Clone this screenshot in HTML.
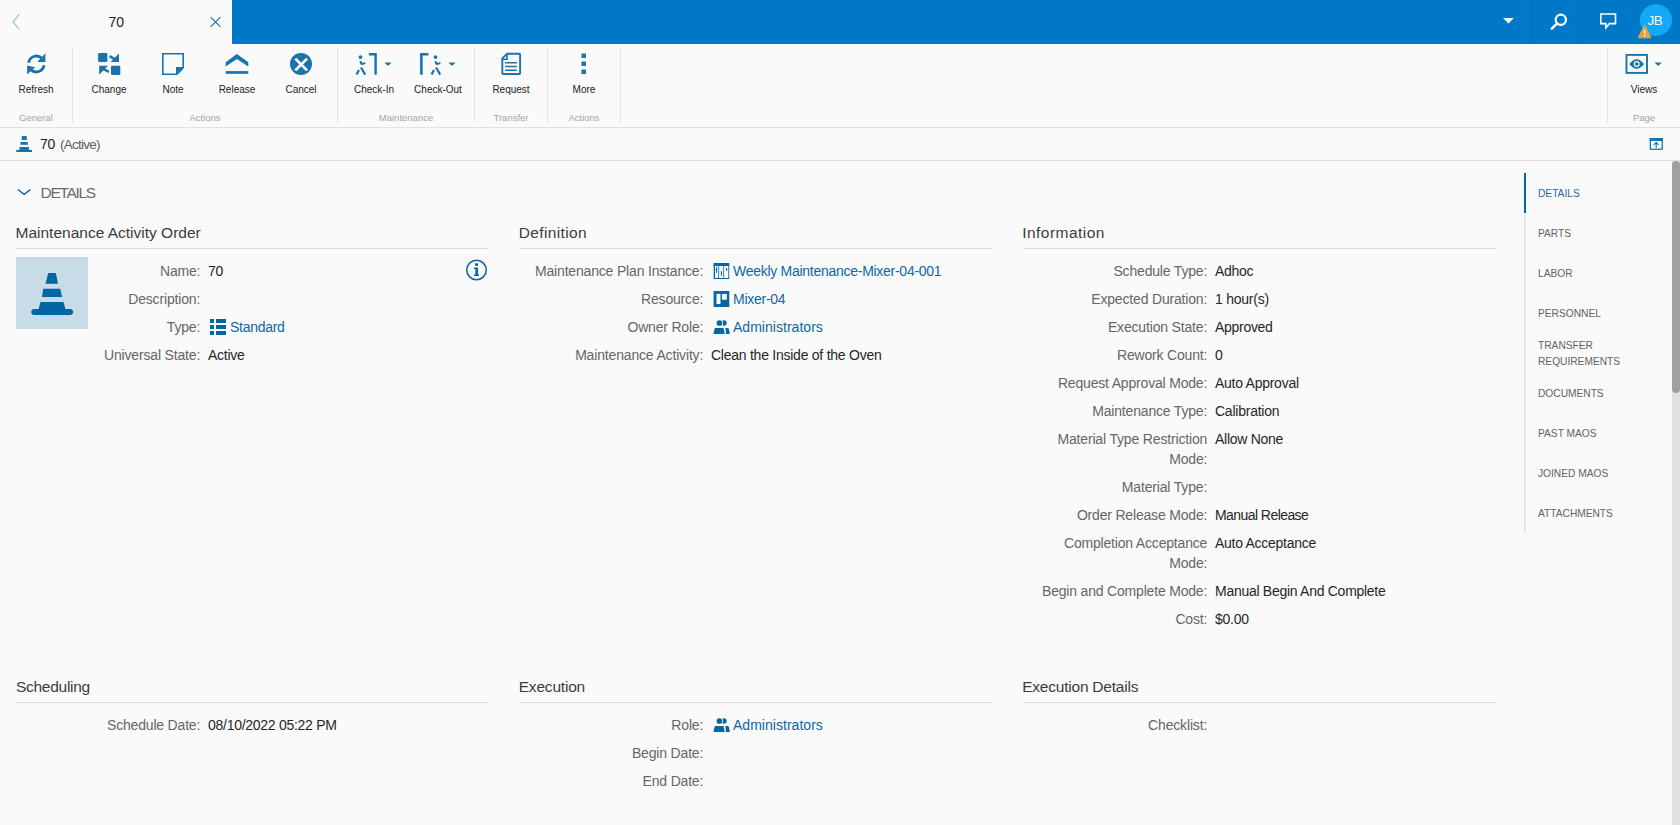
<!DOCTYPE html>
<html><head><meta charset="utf-8"><style>
html,body{margin:0;padding:0;width:1680px;height:825px;overflow:hidden;background:#fafafa;position:relative;font-family:"Liberation Sans", sans-serif}
.t{position:absolute;white-space:nowrap;line-height:1}
svg{overflow:visible}
</style></head><body>
<div style="position:absolute;left:232px;top:0px;width:1448px;height:44px;background:#0078c8"></div>
<div style="position:absolute;left:1532px;top:0px;width:1px;height:44px;background:#0570b8"></div>
<div style="position:absolute;left:1583px;top:0px;width:1px;height:44px;background:#0570b8"></div>
<svg style="position:absolute;left:0px;top:0px" width="30" height="40" viewBox="0 0 30 40"><path d="M19.2 14.3 L13.1 21.9 L19.2 29.4" fill="none" stroke="#a6c8e0" stroke-width="1.4"/></svg>
<div class="t" style="left:108.5px;top:15.15px;font-size:14px;color:#222;">70</div>
<svg style="position:absolute;left:210px;top:17px" width="11" height="11" viewBox="0 0 11 11"><path d="M0.6 0.2 L10.4 9.9 M10.4 0.2 L0.6 9.9" stroke="#2a6aa0" stroke-width="1.1"/></svg>
<svg style="position:absolute;left:1503px;top:17px" width="11" height="7" viewBox="0 0 11 7"><path d="M0 1 H10.8 L5.4 6.5 Z" fill="#fff"/></svg>
<svg style="position:absolute;left:1540px;top:0px" width="40" height="44" viewBox="0 0 40 44"><circle cx="20.8" cy="19.8" r="5.1" fill="none" stroke="#fff" stroke-width="2.2"/><path d="M17.2 23.4 L11.8 28.6" stroke="#fff" stroke-width="2.6" stroke-linecap="round"/></svg>
<svg style="position:absolute;left:1590px;top:0px" width="40" height="44" viewBox="0 0 40 44"><path d="M10.8 14 H25.5 V23.6 H19.5 L15.8 27.8 V23.6 H10.8 Z" fill="none" stroke="#fff" stroke-width="1.6" stroke-linejoin="miter"/></svg>
<svg style="position:absolute;left:1640px;top:4px" width="32" height="32" viewBox="0 0 32 32"><circle cx="16" cy="16" r="16" fill="#13a9f8"/></svg>
<div class="t" style="left:1355px;width:600px;text-align:center;top:13.77px;font-size:13.5px;color:#f4faff;letter-spacing:-0.5px">JB</div>
<svg style="position:absolute;left:1637.5px;top:24.5px" width="15" height="14" viewBox="0 0 15 14"><path d="M6.6 1 L12.6 12.4 H0.7 Z" fill="#e0a24e" stroke="#e0a24e" stroke-linejoin="round" stroke-width="1.5"/><path d="M6.6 4.9 V8.8" stroke="#eef6fb" stroke-width="1.4"/><rect x="5.9" y="10" width="1.4" height="1.4" fill="#eef6fb"/></svg>
<div style="position:absolute;left:0px;top:127px;width:1680px;height:1px;background:#e2e2e2"></div>
<div style="position:absolute;left:72px;top:48px;width:1px;height:75px;background:#e4e4e4"></div>
<div style="position:absolute;left:337px;top:48px;width:1px;height:75px;background:#e4e4e4"></div>
<div style="position:absolute;left:474px;top:48px;width:1px;height:75px;background:#e4e4e4"></div>
<div style="position:absolute;left:547px;top:48px;width:1px;height:75px;background:#e4e4e4"></div>
<div style="position:absolute;left:620px;top:48px;width:1px;height:75px;background:#e4e4e4"></div>
<div style="position:absolute;left:1607px;top:48px;width:1px;height:75px;background:#e4e4e4"></div>
<div class="t" style="left:-264px;width:600px;text-align:center;top:84.53px;font-size:10px;color:#222;">Refresh</div>
<div class="t" style="left:-191px;width:600px;text-align:center;top:84.53px;font-size:10px;color:#222;">Change</div>
<div class="t" style="left:-127px;width:600px;text-align:center;top:84.53px;font-size:10px;color:#222;">Note</div>
<div class="t" style="left:-63px;width:600px;text-align:center;top:84.53px;font-size:10px;color:#222;">Release</div>
<div class="t" style="left:1px;width:600px;text-align:center;top:84.53px;font-size:10px;color:#222;">Cancel</div>
<div class="t" style="left:74px;width:600px;text-align:center;top:84.53px;font-size:10px;color:#222;">Check-In</div>
<div class="t" style="left:138px;width:600px;text-align:center;top:84.53px;font-size:10px;color:#222;">Check-Out</div>
<div class="t" style="left:211px;width:600px;text-align:center;top:84.53px;font-size:10px;color:#222;">Request</div>
<div class="t" style="left:284px;width:600px;text-align:center;top:84.53px;font-size:10px;color:#222;">More</div>
<div class="t" style="left:1344px;width:600px;text-align:center;top:84.53px;font-size:10px;color:#222;">Views</div>
<div class="t" style="left:-264px;width:600px;text-align:center;top:112.96px;font-size:9.5px;color:#a3a3a3;">General</div>
<div class="t" style="left:-95px;width:600px;text-align:center;top:112.96px;font-size:9.5px;color:#a3a3a3;">Actions</div>
<div class="t" style="left:106px;width:600px;text-align:center;top:112.96px;font-size:9.5px;color:#a3a3a3;">Maintenance</div>
<div class="t" style="left:211px;width:600px;text-align:center;top:112.96px;font-size:9.5px;color:#a3a3a3;">Transfer</div>
<div class="t" style="left:284px;width:600px;text-align:center;top:112.96px;font-size:9.5px;color:#a3a3a3;">Actions</div>
<div class="t" style="left:1344px;width:600px;text-align:center;top:112.96px;font-size:9.5px;color:#a3a3a3;">Page</div>
<svg style="position:absolute;left:22px;top:50px" width="30" height="30" viewBox="0 0 30 30"><path d="M6.6 12.8 A7.9 7.9 0 0 1 19.8 8.2" fill="none" stroke="#1a73ab" stroke-width="2.8"/>
<path d="M23.4 3.3 V12.1 H15.2 Z" fill="#1a73ab"/>
<path d="M22 15.2 A7.9 7.9 0 0 1 8.8 19.8" fill="none" stroke="#1a73ab" stroke-width="2.8"/>
<path d="M5.1 15.4 V24.5 H5.1 L13.2 17.3 Z" fill="#1a73ab"/></svg>
<svg style="position:absolute;left:95px;top:50px" width="30" height="30" viewBox="0 0 30 30"><rect x="3.1" y="2.9" width="9.3" height="9.1" rx="1.2" fill="#1a73ab"/>
<rect x="16" y="15.8" width="9.3" height="9.1" rx="1.2" fill="#1a73ab"/>
<path d="M14.6 6.2 L20.5 9.6" stroke="#1a73ab" stroke-width="2.5"/><path d="M24 3.6 V12 H15.5 Z" fill="#1a73ab"/>
<path d="M13.8 22 L8 18.6" stroke="#1a73ab" stroke-width="2.5"/><path d="M4.2 24.7 V15.8 H12.9 Z" fill="#1a73ab"/></svg>
<svg style="position:absolute;left:162px;top:53px" width="23" height="23" viewBox="0 0 23 23"><path d="M0.8 0.8 H21.2 V14.5 L14.5 21.2 H0.8 Z" fill="none" stroke="#1a73ab" stroke-width="1.6"/>
<path d="M21.2 14 V16 L16 21.2 H14 V14 Z" fill="#1a73ab"/></svg>
<svg style="position:absolute;left:225px;top:53px" width="24" height="22" viewBox="0 0 24 22"><path d="M0.7 9.2 L11.9 1.1 L23.3 9.2 V13.6 L11.9 5.9 L0.7 13.6 Z" fill="#1a73ab"/>
<rect x="0.7" y="18.1" width="22.6" height="2.7" fill="#1a73ab"/></svg>
<svg style="position:absolute;left:290px;top:53px" width="22" height="22" viewBox="0 0 22 22"><circle cx="11" cy="11" r="11" fill="#1a73ab"/>
<path d="M5.3 5.6 L17.1 17.4 M17.1 5.6 L5.3 17.4" stroke="#fff" stroke-width="2.7"/></svg>
<svg style="position:absolute;left:350px;top:48px" width="46" height="32" viewBox="0 0 46 32"><circle cx="10.5" cy="9.1" r="1.9" fill="#1a73ab"/>
<path d="M10.3 13.3 L11.6 16 L15.4 15.1" fill="none" stroke="#1a73ab" stroke-width="2" stroke-linejoin="round"/>
<path d="M11 19.5 L15.2 26.6 M8.9 22 L6.6 26.6" fill="none" stroke="#1a73ab" stroke-width="2.2"/><path d="M18.9 6.2 H25.6 V26.8" fill="none" stroke="#1a73ab" stroke-width="2.4"/>
<path d="M34.5 14.5 H41.5 L38 18 Z" fill="#1a73ab"/></svg>
<svg style="position:absolute;left:414px;top:48px" width="46" height="32" viewBox="0 0 46 32"><path d="M14.5 6.2 H7.4 V26.8" fill="none" stroke="#1a73ab" stroke-width="2.6"/><circle cx="21.5" cy="9.1" r="1.9" fill="#1a73ab"/>
<path d="M21.3 13.3 L22.6 16 L26.4 15.1" fill="none" stroke="#1a73ab" stroke-width="2" stroke-linejoin="round"/>
<path d="M22 19.5 L26.2 26.6 M19.9 22 L17.6 26.6" fill="none" stroke="#1a73ab" stroke-width="2.2"/><path d="M34.5 14.5 H41.5 L38 18 Z" fill="#1a73ab"/></svg>
<svg style="position:absolute;left:496px;top:48px" width="32" height="32" viewBox="0 0 32 32"><path d="M10.9 5.8 H23.2 Q24.1 5.8 24.1 6.7 V25.1 Q24.1 26 23.2 26 H7.2 Q6.3 26 6.3 25.1 V10.4 Z" fill="none" stroke="#1a73ab" stroke-width="1.9" stroke-linejoin="round"/>
<path d="M11 5.8 V11.3 H6.3" fill="none" stroke="#1a73ab" stroke-width="1.6"/>
<path d="M9.1 14.7 H20.9 M9.1 18.6 H20.9 M9.1 22.3 H20.9" stroke="#1a73ab" stroke-width="1.5"/></svg>
<svg style="position:absolute;left:581px;top:53px" width="6" height="22" viewBox="0 0 6 22"><rect x="0.5" y="0.5" width="4.5" height="4.5" fill="#1a73ab"/><rect x="0.5" y="8.5" width="4.5" height="4.5" fill="#1a73ab"/><rect x="0.5" y="16.5" width="4.5" height="4.5" fill="#1a73ab"/></svg>
<svg style="position:absolute;left:1620px;top:48px" width="46" height="32" viewBox="0 0 46 32"><rect x="6.5" y="6.9" width="20.5" height="18" fill="none" stroke="#1a73ab" stroke-width="1.9"/>
<path d="M9.3 16 Q16.7 6.5 24 16 Q16.7 25.5 9.3 16 Z" fill="#1a73ab"/><circle cx="16.7" cy="16" r="3" fill="#fafafa"/><circle cx="16.7" cy="16" r="1.8" fill="#1a73ab"/>
<path d="M34.5 14.5 H41.8 L38.2 18 Z" fill="#1a73ab"/></svg>
<div style="position:absolute;left:0px;top:160px;width:1680px;height:1px;background:#e2e2e2"></div>
<svg style="position:absolute;left:12px;top:132px" width="24" height="24" viewBox="0 0 24 24"><path d="M9.9 3.9 H14.6 L15 7.9 H9.6 Z M8.6 10 H15.7 L16 12.8 H8.3 Z M7.6 15 H16.8 L17 17.9 H20 V20 H4.2 V17.9 H7.3 Z" fill="#1a73ab"/></svg>
<div class="t" style="left:40px;top:137.15px;font-size:14px;color:#222;letter-spacing:-0.3px">70</div>
<div class="t" style="left:60px;top:137.57px;font-size:13.5px;color:#5a5a5a;letter-spacing:-0.75px">(Active)</div>
<svg style="position:absolute;left:1644px;top:132px" width="24" height="24" viewBox="0 0 24 24"><rect x="6.35" y="6.65" width="11.9" height="10.6" fill="none" stroke="#1a73ab" stroke-width="1.3"/><rect x="5.7" y="6" width="13.2" height="3" fill="#1a73ab"/>
<path d="M12.2 15.9 V10.4 M9.9 12.8 L12.2 10.4 L14.5 12.8" fill="none" stroke="#1a73ab" stroke-width="1.1"/></svg>
<svg style="position:absolute;left:12px;top:180px" width="28" height="24" viewBox="0 0 28 24"><path d="M5.8 9.5 L12.2 14.3 L18.5 9.5" fill="none" stroke="#1b62a2" stroke-width="1.5"/></svg>
<div class="t" style="left:40.5px;top:184.88px;font-size:15.5px;color:#6a6a6a;letter-spacing:-1.3px">DETAILS</div>
<div class="t" style="left:15.5px;top:224.88px;font-size:15.5px;color:#3c3c3c;letter-spacing:0px">Maintenance Activity Order</div>
<div style="position:absolute;left:16px;top:248px;width:473px;height:1px;background:#dcdcdc"></div>
<div class="t" style="left:518.7px;top:224.88px;font-size:15.5px;color:#3c3c3c;letter-spacing:0.37px">Definition</div>
<div style="position:absolute;left:519px;top:248px;width:474px;height:1px;background:#dcdcdc"></div>
<div class="t" style="left:1022.2px;top:224.88px;font-size:15.5px;color:#3c3c3c;letter-spacing:0.47px">Information</div>
<div style="position:absolute;left:1023px;top:248px;width:473px;height:1px;background:#dcdcdc"></div>
<div class="t" style="left:16px;top:678.88px;font-size:15.5px;color:#3c3c3c;letter-spacing:-0.28px">Scheduling</div>
<div style="position:absolute;left:16px;top:702px;width:473px;height:1px;background:#dcdcdc"></div>
<div class="t" style="left:518.7px;top:678.88px;font-size:15.5px;color:#3c3c3c;letter-spacing:-0.19px">Execution</div>
<div style="position:absolute;left:519px;top:702px;width:474px;height:1px;background:#dcdcdc"></div>
<div class="t" style="left:1022.2px;top:678.88px;font-size:15.5px;color:#3c3c3c;letter-spacing:-0.22px">Execution Details</div>
<div style="position:absolute;left:1023px;top:702px;width:473px;height:1px;background:#dcdcdc"></div>
<div class="t" style="right:1479.7820584375px;text-align:right;top:264.15px;font-size:14px;color:#666666;letter-spacing:-0.218px">Name:</div>
<div class="t" style="left:208px;top:264.15px;font-size:14px;color:#262626;letter-spacing:-0.306px">70</div>
<div class="t" style="right:1479.837214453125px;text-align:right;top:292.15px;font-size:14px;color:#666666;letter-spacing:-0.163px">Description:</div>
<div class="t" style="right:1479.81902375px;text-align:right;top:320.15px;font-size:14px;color:#666666;letter-spacing:-0.181px">Type:</div>
<svg style="position:absolute;left:210px;top:319px" width="17" height="17" viewBox="0 0 17 17"><g fill="#0566a5"><rect x="0" y="0" width="4" height="4"/><rect x="6" y="0" width="10" height="4"/><rect x="0" y="6" width="4" height="4"/><rect x="6" y="6" width="10" height="4"/><rect x="0" y="12" width="4" height="4"/><rect x="6" y="12" width="10" height="4"/></g></svg>
<div class="t" style="left:230px;top:320.15px;font-size:14px;color:#0b67a8;letter-spacing:-0.279px">Standard</div>
<div class="t" style="right:1479.8367772460938px;text-align:right;top:348.15px;font-size:14px;color:#666666;letter-spacing:-0.163px">Universal State:</div>
<div class="t" style="left:208px;top:348.15px;font-size:14px;color:#262626;letter-spacing:-0.250px">Active</div>
<svg style="position:absolute;left:16px;top:257px" width="72" height="72" viewBox="0 0 72 72"><rect width="72" height="72" fill="#c8dce8"/>
<path d="M32.2 16 H39.8 L42 26.8 H29.5 Z M27.3 31.7 H44.2 L46.1 39.9 H25.9 Z M24.5 45.1 H47.5 L49.4 51.9 H54.1 Q57.1 51.9 57.1 54.9 Q57.1 57.9 54.1 57.9 H18.3 Q15.3 57.9 15.3 54.9 Q15.3 51.9 18.3 51.9 H22.6 Z" fill="#0066a4"/></svg>
<svg style="position:absolute;left:460px;top:255px" width="32" height="32" viewBox="0 0 32 32"><circle cx="16.5" cy="15" r="9.75" fill="none" stroke="#0566a5" stroke-width="1.5"/>
<rect x="15.1" y="8.3" width="2.9" height="2.6" fill="#0566a5"/><path d="M14 12.4 H18 V19.4 H19 V21.1 H14 V19.4 H15.4 V13.9 H14 Z" fill="#0566a5"/></svg>
<div class="t" style="right:976.8243856370192px;text-align:right;top:264.15px;font-size:14px;color:#666666;letter-spacing:-0.176px">Maintenance Plan Instance:</div>
<svg style="position:absolute;left:713px;top:263px" width="17" height="17" viewBox="0 0 17 17"><g fill="#0566a5"><rect x="0.7" y="0" width="15.5" height="2.9" rx="0.5"/><rect x="0.7" y="0" width="1.3" height="15.9"/><rect x="15.3" y="0" width="0.9" height="15.9"/><rect x="0.7" y="14.9" width="15.5" height="1" rx="0.3"/><rect x="5.3" y="0" width="0.8" height="15.9"/><rect x="10.3" y="0" width="0.8" height="15.9"/><rect x="3" y="4.1" width="1.1" height="5.6"/><rect x="7.9" y="8.2" width="1.1" height="4.5"/><rect x="13" y="5" width="1.2" height="2.7"/></g></svg>
<div class="t" style="left:733px;top:264.15px;font-size:14px;color:#0b67a8;letter-spacing:-0.275px">Weekly Maintenance-Mixer-04-001</div>
<div class="t" style="right:976.8126425347223px;text-align:right;top:292.15px;font-size:14px;color:#666666;letter-spacing:-0.187px">Resource:</div>
<svg style="position:absolute;left:713px;top:291px" width="17" height="17" viewBox="0 0 17 17"><rect x="0.6" y="0" width="15.7" height="16" fill="#0566a5"/><rect x="3.5" y="2.9" width="4" height="10.1" fill="#fafafa"/><rect x="9" y="2.9" width="4.85" height="5.8" fill="#fafafa"/></svg>
<div class="t" style="left:733px;top:292.15px;font-size:14px;color:#0b67a8;letter-spacing:-0.267px">Mixer-04</div>
<div class="t" style="right:976.8130711647727px;text-align:right;top:320.15px;font-size:14px;color:#666666;letter-spacing:-0.187px">Owner Role:</div>
<svg style="position:absolute;left:713px;top:319px" width="18" height="17" viewBox="0 0 18 17"><circle cx="10.9" cy="4" r="2.8" fill="#0566a5"/><circle cx="6.45" cy="4" r="3.7" fill="#fafafa"/><g fill="#0566a5"><circle cx="6.45" cy="4" r="2.85"/><path d="M2.3 8.9 H10.1 Q10.6 8.9 10.7 9.4 L11.8 14.9 H0.4 L1.7 9.4 Q1.8 8.9 2.3 8.9 Z"/><path d="M12.3 8.9 H14.6 Q15.6 8.9 15.9 10 L16.9 14.9 H13.1 Z"/></g></svg>
<div class="t" style="left:733px;top:320.15px;font-size:14px;color:#0b67a8;letter-spacing:0.029px">Administrators</div>
<div class="t" style="right:976.8345020833333px;text-align:right;top:348.15px;font-size:14px;color:#666666;letter-spacing:-0.165px">Maintenance Activity:</div>
<div class="t" style="left:711px;top:348.15px;font-size:14px;color:#262626;letter-spacing:-0.249px">Clean the Inside of the Oven</div>
<div class="t" style="right:472.8183035714285px;text-align:right;top:264.15px;font-size:14px;color:#666666;letter-spacing:-0.182px">Schedule Type:</div>
<div class="t" style="left:1215px;top:264.15px;font-size:14px;color:#262626;letter-spacing:-0.312px">Adhoc</div>
<div class="t" style="right:472.8251878472222px;text-align:right;top:292.15px;font-size:14px;color:#666666;letter-spacing:-0.175px">Expected Duration:</div>
<div class="t" style="left:1215px;top:292.15px;font-size:14px;color:#262626;letter-spacing:-0.245px">1 hour(s)</div>
<div class="t" style="right:472.83160664062507px;text-align:right;top:320.15px;font-size:14px;color:#666666;letter-spacing:-0.168px">Execution State:</div>
<div class="t" style="left:1215px;top:320.15px;font-size:14px;color:#262626;letter-spacing:-0.294px">Approved</div>
<div class="t" style="right:472.81177139423085px;text-align:right;top:348.15px;font-size:14px;color:#666666;letter-spacing:-0.188px">Rework Count:</div>
<div class="t" style="left:1215px;top:348.15px;font-size:14px;color:#262626;letter-spacing:-0.306px">0</div>
<div class="t" style="right:472.8158330255683px;text-align:right;top:376.15px;font-size:14px;color:#666666;letter-spacing:-0.184px">Request Approval Mode:</div>
<div class="t" style="left:1215px;top:376.15px;font-size:14px;color:#262626;letter-spacing:-0.263px">Auto Approval</div>
<div class="t" style="right:472.81650312500005px;text-align:right;top:404.15px;font-size:14px;color:#666666;letter-spacing:-0.183px">Maintenance Type:</div>
<div class="t" style="left:1215px;top:404.15px;font-size:14px;color:#262626;letter-spacing:-0.239px">Calibration</div>
<div class="t" style="right:472.83741968749996px;text-align:right;top:432.15px;font-size:14px;color:#666666;letter-spacing:-0.163px">Material Type Restriction</div>
<div class="t" style="left:1215px;top:432.15px;font-size:14px;color:#262626;letter-spacing:-0.278px">Allow None</div>
<div class="t" style="right:472.7943493749999px;text-align:right;top:452.15px;font-size:14px;color:#666666;letter-spacing:-0.206px">Mode:</div>
<div class="t" style="right:472.83451171875004px;text-align:right;top:480.15px;font-size:14px;color:#666666;letter-spacing:-0.165px">Material Type:</div>
<div class="t" style="right:472.81384374999993px;text-align:right;top:508.15px;font-size:14px;color:#666666;letter-spacing:-0.186px">Order Release Mode:</div>
<div class="t" style="left:1215px;top:508.15px;font-size:14px;color:#262626;letter-spacing:-0.564px">Manual Release</div>
<div class="t" style="right:472.81489813988105px;text-align:right;top:536.15px;font-size:14px;color:#666666;letter-spacing:-0.185px">Completion Acceptance</div>
<div class="t" style="left:1215px;top:536.15px;font-size:14px;color:#262626;letter-spacing:-0.275px">Auto Acceptance</div>
<div class="t" style="right:472.7943493749999px;text-align:right;top:556.15px;font-size:14px;color:#666666;letter-spacing:-0.206px">Mode:</div>
<div class="t" style="right:472.81318372395845px;text-align:right;top:584.15px;font-size:14px;color:#666666;letter-spacing:-0.187px">Begin and Complete Mode:</div>
<div class="t" style="left:1215px;top:584.15px;font-size:14px;color:#262626;letter-spacing:-0.279px">Manual Begin And Complete</div>
<div class="t" style="right:472.82729093750004px;text-align:right;top:612.15px;font-size:14px;color:#666666;letter-spacing:-0.173px">Cost:</div>
<div class="t" style="left:1215px;top:612.15px;font-size:14px;color:#262626;letter-spacing:-0.275px">$0.00</div>
<div class="t" style="right:1479.8192946428571px;text-align:right;top:718.15px;font-size:14px;color:#666666;letter-spacing:-0.181px">Schedule Date:</div>
<div class="t" style="left:208px;top:718.15px;font-size:14px;color:#262626;letter-spacing:-0.277px">08/10/2022 05:22 PM</div>
<div class="t" style="right:976.82725625px;text-align:right;top:718.15px;font-size:14px;color:#666666;letter-spacing:-0.173px">Role:</div>
<svg style="position:absolute;left:713px;top:717px" width="18" height="17" viewBox="0 0 18 17"><circle cx="10.9" cy="4" r="2.8" fill="#0566a5"/><circle cx="6.45" cy="4" r="3.7" fill="#fafafa"/><g fill="#0566a5"><circle cx="6.45" cy="4" r="2.85"/><path d="M2.3 8.9 H10.1 Q10.6 8.9 10.7 9.4 L11.8 14.9 H0.4 L1.7 9.4 Q1.8 8.9 2.3 8.9 Z"/><path d="M12.3 8.9 H14.6 Q15.6 8.9 15.9 10 L16.9 14.9 H13.1 Z"/></g></svg>
<div class="t" style="left:733px;top:718.15px;font-size:14px;color:#0b67a8;letter-spacing:0.029px">Administrators</div>
<div class="t" style="right:976.8242394886364px;text-align:right;top:746.15px;font-size:14px;color:#666666;letter-spacing:-0.176px">Begin Date:</div>
<div class="t" style="right:976.8171776041667px;text-align:right;top:774.15px;font-size:14px;color:#666666;letter-spacing:-0.183px">End Date:</div>
<div class="t" style="right:472.839628125px;text-align:right;top:718.15px;font-size:14px;color:#666666;letter-spacing:-0.160px">Checklist:</div>
<div style="position:absolute;left:1524px;top:173px;width:2px;height:360px;background:#e6e6e6"></div>
<div style="position:absolute;left:1524px;top:173px;width:2px;height:40px;background:#0566a5"></div>
<div class="t" style="left:1538px;top:189.37px;font-size:10.2px;color:#1f6aab;">DETAILS</div>
<div class="t" style="left:1538px;top:229.37px;font-size:10.2px;color:#636363;">PARTS</div>
<div class="t" style="left:1538px;top:269.37px;font-size:10.2px;color:#636363;">LABOR</div>
<div class="t" style="left:1538px;top:309.37px;font-size:10.2px;color:#636363;">PERSONNEL</div>
<div class="t" style="left:1538px;top:341.37px;font-size:10.2px;color:#636363;">TRANSFER</div>
<div class="t" style="left:1538px;top:357.37px;font-size:10.2px;color:#636363;">REQUIREMENTS</div>
<div class="t" style="left:1538px;top:389.37px;font-size:10.2px;color:#636363;">DOCUMENTS</div>
<div class="t" style="left:1538px;top:429.37px;font-size:10.2px;color:#636363;">PAST MAOS</div>
<div class="t" style="left:1538px;top:469.37px;font-size:10.2px;color:#636363;">JOINED MAOS</div>
<div class="t" style="left:1538px;top:509.37px;font-size:10.2px;color:#636363;">ATTACHMENTS</div>
<div style="position:absolute;left:1672px;top:161px;width:8px;height:664px;background:#e0e0e0"></div>
<div style="position:absolute;left:1672px;top:161px;width:8px;height:232px;background:#a0a0a0;border-radius:4px"></div>
</body></html>
